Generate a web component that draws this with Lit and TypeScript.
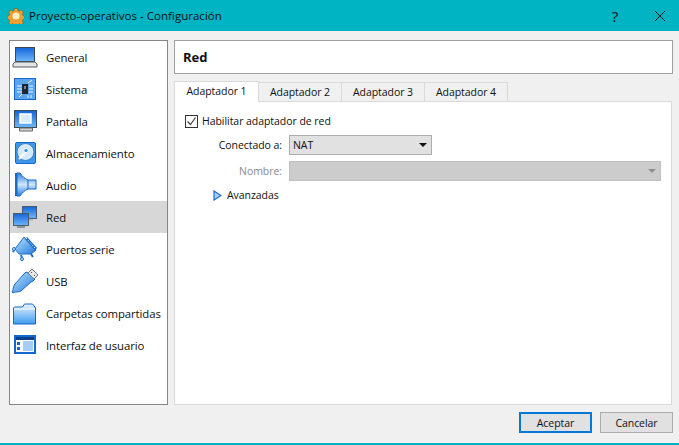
import { LitElement, html, css, svg } from "lit";
import { customElement } from "lit/decorators.js";

const defs = svg`
  <defs>
    <linearGradient id="blue" x1="0" y1="0" x2="0" y2="1">
      <stop offset="0" stop-color="#1565dc" />
      <stop offset="1" stop-color="#6fb6f8" />
    </linearGradient>
    <linearGradient id="bluev" x1="0" y1="0" x2="1" y2="1">
      <stop offset="0" stop-color="#bfe6ff" />
      <stop offset="1" stop-color="#1f78dc" />
    </linearGradient>
    <linearGradient id="horn" x1="0" y1="0" x2="0" y2="1">
      <stop offset="0" stop-color="#2a7fdc" />
      <stop offset="0.5" stop-color="#cfe7fd" />
      <stop offset="1" stop-color="#2a7fdc" />
    </linearGradient>
    <linearGradient id="folder" x1="0" y1="0" x2="0" y2="1">
      <stop offset="0" stop-color="#e6f3fe" />
      <stop offset="1" stop-color="#3f9bee" />
    </linearGradient>
  </defs>
`;

const icons: Record<string, unknown> = {
  general: svg`
    <rect x="5.5" y="4.5" width="19" height="14" fill="url(#blue)" stroke="#3c4a58" />
    <path d="M5 19h20l2 2v3H3v-3z" fill="#e4e4e4" stroke="#555c64" />
  `,
  sistema: svg`
    <rect x="4.5" y="3.5" width="21" height="21" fill="#5aa5f0" stroke="#1467cc" />
    <path d="M7 11h5M7 14h5M7 17h5M19 11h4M19 14h4M19 17h4M18 8l4-3M9 22l3-3M18 20v3M21 20v3" stroke="#e8f4ff" />
    <rect x="12" y="9" width="6" height="10" fill="#20262c" />
    <rect x="14" y="11" width="2" height="3" fill="#7d8790" />
  `,
  pantalla: svg`
    <rect x="4.5" y="3.5" width="22" height="17" fill="url(#blue)" stroke="#3c4a58" />
    <rect x="10" y="7" width="11" height="9" fill="#d9ecfd" stroke="#fff" stroke-width="1.5" />
    <path d="M9.5 21h13v3h-13z" fill="#d4d4d4" stroke="#666" />
  `,
  almacenamiento: svg`
    <rect x="5.5" y="3.5" width="20" height="21" rx="1.5" fill="#3f97ea" stroke="#1467cc" />
    <circle cx="15.5" cy="13" r="8.5" fill="#d4e9fb" stroke="#3b7dc4" />
    <circle cx="16" cy="11.5" r="2.2" fill="#3f97ea" stroke="#fff" />
    <path d="M9 20l6-6" stroke="#fff" stroke-width="2" />
  `,
  audio: svg`
    <path d="M7 2h3c2 3 5 6 8 7h8v9h-8c-3 1-6 4-8 7H7z" fill="url(#horn)" stroke="#1a6ac8" />
    <path d="M6 2v23" stroke="#1a6ac8" stroke-width="2" />
    <path d="M18 9v9" stroke="#1a6ac8" />
  `,
  red: svg`
    <rect x="12.5" y="3.5" width="14" height="12" fill="url(#blue)" stroke="#4a5a6a" />
    <path d="M16 16h7v2h-7z" fill="#b9bec4" />
    <rect x="3.5" y="10.5" width="15" height="12" fill="url(#blue)" stroke="#4a5a6a" />
    <path d="M7 23h8v2H7z" fill="#8e959c" />
  `,
  serie: svg`
    <path d="M14 2l12 13-5 4H9L5 14z" fill="url(#bluev)" stroke="#1a6ac8" />
    <path d="M16 3l10 11" stroke="#1a6ac8" stroke-width="3" />
    <path d="M16 3l10 11" stroke="#fff" stroke-dasharray="1.5 1.5" />
    <path d="M4 15l-1 2M11 20l1 3M21 19l2 3" stroke="#1a6ac8" stroke-width="2" />
    <circle cx="4" cy="14" r="1.5" fill="#cfe7fd" stroke="#1a6ac8" />
    <circle cx="12" cy="24" r="1.5" fill="#cfe7fd" stroke="#1a6ac8" />
  `,
  usb: svg`
    <path d="M20 7l5 5-2 2-2 1-10 9c-2 1-5 1-6 1l-2 1-1-1 1-2c0-2 1-5 2-6l9-10 2-2z" fill="url(#bluev)" stroke="#1a6ac8" />
    <path d="M18 6l4-4 6 6-4 4z" fill="#e6e6e6" stroke="#6e7680" />
    <path d="M21 5l1 1M24 8l1 1" stroke="#555" />
  `,
  carpetas: svg`
    <path d="M3.5 9l1-1h8l2-3h8l1 1 2 3v16h-22z" fill="url(#folder)" stroke="#1467cc" />
    <path d="M4 10h21" stroke="#fff" />
  `,
  interfaz: svg`
    <rect x="4" y="4" width="22" height="19" fill="#1467cc" />
    <rect x="6" y="6" width="18" height="15" fill="#fff" />
    <rect x="6" y="6" width="18" height="3" fill="#0e3f8c" />
    <rect x="13" y="10" width="10" height="10" fill="#a6cdfa" />
    <rect x="7" y="11" width="3" height="3" fill="#1467cc" />
    <rect x="7" y="16" width="3" height="3" fill="#1467cc" />
  `,
};

const sections = [
  ["general", "General"],
  ["sistema", "Sistema"],
  ["pantalla", "Pantalla"],
  ["almacenamiento", "Almacenamiento"],
  ["audio", "Audio"],
  ["red", "Red"],
  ["serie", "Puertos serie"],
  ["usb", "USB"],
  ["carpetas", "Carpetas compartidas"],
  ["interfaz", "Interfaz de usuario"],
];

const tabs = ["Adaptador 1", "Adaptador 2", "Adaptador 3", "Adaptador 4"];

@customElement("app-root")
export class AppRoot extends LitElement {
  static styles = css`
    :host {
      display: block;
      width: 679px;
      height: 445px;
      overflow: hidden;
      background: #f0f0f0;
      color: #101010;
      font-family: "Open Sans", "Noto Sans", sans-serif;
      font-size: 10.5px;
      letter-spacing: -0.05px;
      white-space: nowrap;
    }

    .titlebar {
      height: 31px;
      display: flex;
      align-items: center;
      background: #00b4c4;
      padding-left: 8px;
      font-size: 11.55px;
      letter-spacing: 0;
    }
    .titlebar .logo {
      width: 16px;
      height: 16px;
      margin-right: 5px;
    }
    .titlebar .name {
      flex: 1;
    }
    .titlebar .help {
      width: 16px;
      font-size: 15px;
      text-align: center;
      margin-right: 31px;
    }
    .titlebar .close {
      width: 12px;
      height: 12px;
      margin-right: 13px;
    }

    .main {
      display: flex;
      gap: 6px;
      padding: 9px 6px 0 9px;
    }

    .sidebar {
      box-sizing: border-box;
      width: 159px;
      height: 365px;
      flex: none;
      background: #fff;
      border: 1px solid #85858a;
      font-size: 11.4px;
      letter-spacing: -0.1px;
    }
    .row {
      height: 32px;
      display: flex;
      align-items: center;
    }
    .row.active {
      background: #d7d7d7;
    }
    .row svg {
      width: 28px;
      height: 28px;
      flex: none;
      margin-right: 8px;
    }

    .content {
      flex: 1;
      min-width: 0;
    }
    .header {
      box-sizing: border-box;
      height: 34px;
      display: flex;
      align-items: center;
      background: #fff;
      border: 1px solid #a0a0a0;
      padding-left: 8px;
      font-size: 13px;
      font-weight: 700;
    }

    .tabs {
      display: flex;
      align-items: flex-end;
      height: 21px;
      margin-top: 6px;
    }
    .tab {
      box-sizing: border-box;
      width: 83px;
      height: 19px;
      display: flex;
      align-items: center;
      justify-content: center;
      background: #f0f0f0;
      border: 1px solid #d9d9d9;
      border-left: none;
      border-bottom: none;
    }
    .tab.active {
      width: 85px;
      height: 21px;
      padding-bottom: 2px;
      background: #fff;
      border-left: 1px solid #d9d9d9;
      margin-bottom: -1px;
      position: relative;
      z-index: 1;
    }

    .panel {
      box-sizing: border-box;
      width: 498px;
      height: 304px;
      background: #fff;
      border: 1px solid #d9d9d9;
      padding: 11px 10px 0 10px;
    }
    .check-row {
      display: flex;
      align-items: center;
      gap: 4px;
      height: 16px;
    }
    .check {
      box-sizing: border-box;
      width: 13px;
      height: 13px;
      background: #fff;
      border: 1px solid #333;
      display: flex;
    }
    .check svg {
      width: 11px;
      height: 11px;
    }

    .field {
      display: grid;
      grid-template-columns: 97px 1fr;
      column-gap: 7px;
      row-gap: 6px;
      align-items: center;
      margin-top: 6px;
    }
    .field label {
      text-align: right;
    }
    .field label.off {
      color: #8a8a8a;
    }
    .select {
      box-sizing: border-box;
      height: 20px;
      display: flex;
      align-items: center;
      justify-content: space-between;
      padding: 0 4px 0 3px;
      background: #e1e1e1;
      border: 1px solid #adadad;
    }
    .select.nat {
      width: 143px;
    }
    .select.off {
      width: 372px;
      background: #cccccc;
      border-color: #bfbfbf;
    }
    .arrow {
      width: 0;
      height: 0;
      border-left: 4px solid transparent;
      border-right: 4px solid transparent;
      border-top: 4px solid #111;
    }
    .select.off .arrow {
      border-top-color: #8f8f8f;
    }

    .advanced {
      display: flex;
      align-items: center;
      gap: 5px;
      height: 16px;
      margin: 6px 0 0 28px;
    }
    .advanced svg {
      width: 9px;
      height: 11px;
    }

    .buttons {
      display: flex;
      justify-content: flex-end;
      gap: 8px;
      padding: 7px 6px 0 0;
    }
    .btn {
      box-sizing: border-box;
      width: 73px;
      height: 21px;
      display: flex;
      align-items: center;
      justify-content: center;
      background: #e1e1e1;
      border: 1px solid #adadad;
    }
    .btn.default {
      border: 2px solid #0078d7;
    }

    .edge {
      height: 2px;
      margin-top: 10px;
      background: #00b4c4;
    }
  `;

  render() {
    return html`
      <div class="titlebar">
        <svg class="logo" viewBox="0 0 16 16">
          <path
            d="M6.5 0.5h3l.4 2 1.7.7 1.7-1.1 2.1 2.1-1.1 1.7.7 1.7 2 .4v3l-2 .4-.7 1.7 1.1 1.7-2.1 2.1-1.7-1.1-1.7.7-.4 2h-3l-.4-2-1.7-.7-1.7 1.1-2.1-2.1 1.1-1.7-.7-1.7-2-.4v-3l2-.4.7-1.7-1.1-1.7 2.1-2.1 1.7 1.1 1.7-.7z"
            fill="#f0a030"
            stroke="#8a5a10"
            stroke-width="0.6"
          />
          <circle cx="8" cy="8" r="3.5" fill="#ffeec4" />
        </svg>
        <span class="name">Proyecto-operativos - Configuración</span>
        <span class="help">?</span>
        <svg class="close" viewBox="0 0 12 12">
          <path d="M1 1l10 10M11 1L1 11" stroke="#111" stroke-width="1" fill="none" />
        </svg>
      </div>
      <div class="main">
        <div class="sidebar">
          ${sections.map(
            ([id, label]) => html`
              <div class="row ${id === "red" ? "active" : ""}">
                <svg viewBox="0 0 28 28">${defs}${icons[id]}</svg>
                <span>${label}</span>
              </div>
            `
          )}
        </div>
        <div class="content">
          <div class="header">Red</div>
          <div class="tabs">
            ${tabs.map(
              (t, i) => html`<div class="tab ${i === 0 ? "active" : ""}">${t}</div>`
            )}
          </div>
          <div class="panel">
            <div class="check-row">
              <span class="check">
                <svg viewBox="0 0 11 11">
                  <path d="M1.5 5.5l3 3 5-7" stroke="#444" stroke-width="1.2" fill="none" />
                </svg>
              </span>
              <span>Habilitar adaptador de red</span>
            </div>
            <div class="field">
              <label>Conectado a:</label>
              <div class="select nat"><span>NAT</span><span class="arrow"></span></div>
              <label class="off">Nombre:</label>
              <div class="select off"><span></span><span class="arrow"></span></div>
            </div>
            <div class="advanced">
              <svg viewBox="0 0 9 11">
                <path d="M1 1l7 4.5-7 4.5z" fill="#a9d2f7" stroke="#1a6ac8" stroke-width="1.2" />
              </svg>
              <span>Avanzadas</span>
            </div>
          </div>
        </div>
      </div>
      <div class="buttons">
        <div class="btn default">Aceptar</div>
        <div class="btn">Cancelar</div>
      </div>
      <div class="edge"></div>
    `;
  }
}
